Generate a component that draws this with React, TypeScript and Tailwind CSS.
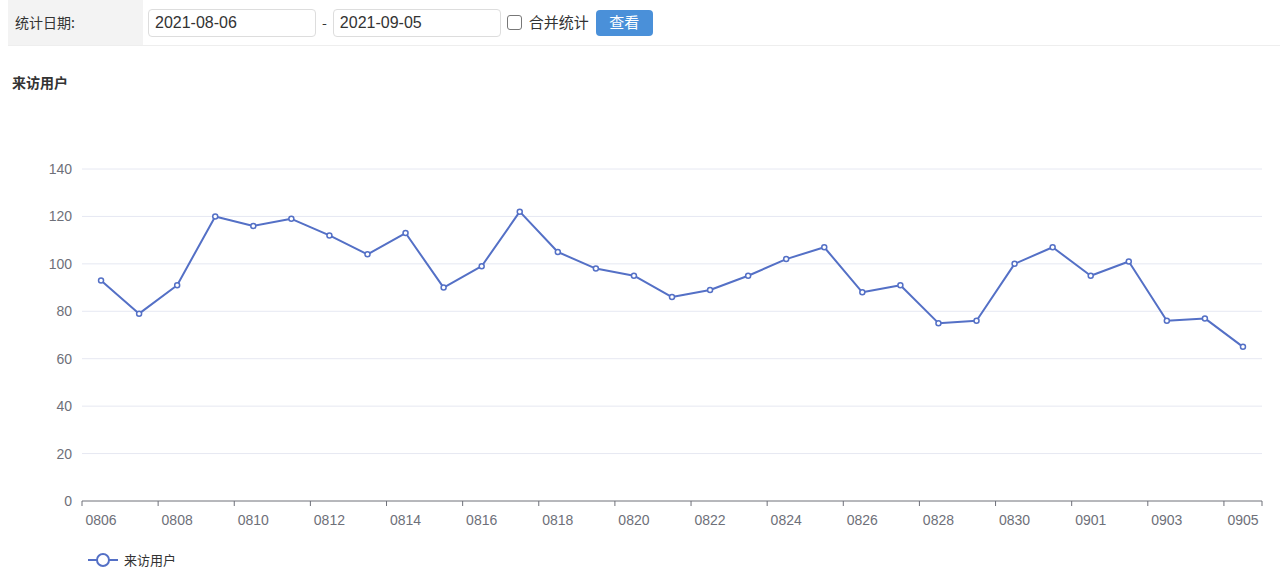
import React from "react";

const data = [93,79,91,120,116,119,112,104,113,90,99,122,105,98,95,86,89,95,102,107,88,91,75,76,100,107,95,101,76,77,65];
const labels = ["0806","0807","0808","0809","0810","0811","0812","0813","0814","0815","0816","0817","0818","0819","0820","0821","0822","0823","0824","0825","0826","0827","0828","0829","0830","0831","0901","0902","0903","0904","0905"];

export default function App() {
  const x0 = 82, x1 = 1262, yb = 501, yt = 169;
  const step = (x1 - x0) / 31;
  const px = (i: number) => x0 + step * (i + 0.5);
  const py = (v: number) => yb - (v / 140) * (yb - yt);
  const pts = data.map((v, i) => `${px(i)},${py(v)}`).join(" ");
  return (
    <div className="w-[1280px] h-[574px] bg-white relative overflow-hidden" style={{ fontFamily: '"Noto Sans CJK SC", "Liberation Sans", sans-serif' }}>
      <div className="flex items-stretch h-[46px] ml-2 border-b border-[#eeeeee]">
        <div className="w-[135px] bg-[#f3f3f3] flex items-center pl-[7px] text-[14px] text-[#333]">统计日期:</div>
        <div className="flex items-center pl-[5px] gap-0 text-[14px] text-[#333]">
          <div className="w-[168px] h-[28px] border border-[#ddd] rounded-sm flex items-center pl-[6px] text-[16px]" style={{ fontFamily: '"Liberation Sans", sans-serif' }}>2021-08-06</div>
          <span className="mx-[6px]">-</span>
          <div className="w-[168px] h-[28px] border border-[#ddd] rounded-sm flex items-center pl-[6px] text-[16px]" style={{ fontFamily: '"Liberation Sans", sans-serif' }}>2021-09-05</div>
          <div className="ml-[6px] w-[15px] h-[15px] border border-[#777] rounded-[3px]"></div>
          <span className="ml-[7px] text-[15px]">合并统计</span>
          <div className="ml-[7px] w-[57px] h-[26px] bg-[#4a90d9] rounded-sm text-white text-[15px] flex items-center justify-center">查看</div>
        </div>
      </div>
      <div className="absolute left-[12px] top-[72px] text-[14px] font-bold text-[#333]">来访用户</div>
      <svg className="absolute left-0 top-0" width="1280" height="574" style={{ fontFamily: '"Liberation Sans", sans-serif' }}>
        {[0,20,40,60,80,100,120,140].map(v => (
          <g key={v}>
            {v > 0 && <line x1={x0} x2={x1} y1={py(v)} y2={py(v)} stroke="#e6e8f2" strokeWidth="1" />}
            <text x={72} y={py(v) + 5} textAnchor="end" fontSize="14" fill="#6e7079">{v}</text>
          </g>
        ))}
        <line x1={x0} x2={x1} y1={yb} y2={yb} stroke="#6e7079" strokeWidth="1" />
        {Array.from({ length: 16 }, (_, k) => x0 + step * 2 * k).concat([x1]).map((x, k) => (
          <line key={k} x1={x} x2={x} y1={yb} y2={yb + 5} stroke="#6e7079" />
        ))}
        {labels.map((l, i) => i % 2 === 0 && (
          <text key={l} x={px(i)} y={525} textAnchor="middle" fontSize="14" fill="#6e7079">{l}</text>
        ))}
        <polyline points={pts} fill="none" stroke="#5470c6" strokeWidth="2" strokeLinejoin="round" />
        {data.map((v, i) => (
          <circle key={i} cx={px(i)} cy={py(v)} r="2.5" fill="#fff" stroke="#5470c6" strokeWidth="1.5" />
        ))}
        <line x1={88} x2={118} y1={560} y2={560} stroke="#5470c6" strokeWidth="2" />
        <circle cx={103} cy={560} r="6" fill="#fff" stroke="#5470c6" strokeWidth="2" />
      </svg>
      <div className="absolute left-[124px] top-[550px] text-[13px] text-[#333]">来访用户</div>
    </div>
  );
}
